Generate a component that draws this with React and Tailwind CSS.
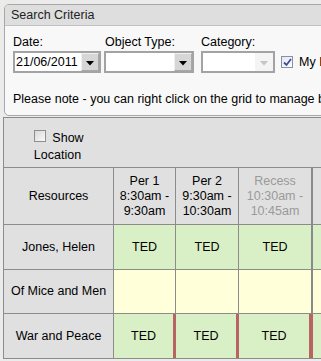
import React from "react";

function DropBtn({ disabled }) {
  return (
    <div
      className={
        "w-[18px] h-[18px] flex items-center justify-center border " +
        (disabled
          ? "bg-[#f4f4f4] border-[#f4f4f4]"
          : "bg-[#d6d6d6] border-t-[#f0f0f0] border-l-[#f0f0f0] border-r-[#a8a8a8] border-b-[#a8a8a8]")
      }
    >
      <svg width="8" height="5" viewBox="0 0 8 5" className="mt-[2px]">
        <polygon points="0,0 8,0 4,4.5" fill={disabled ? "#c4c4c4" : "#000"} />
      </svg>
    </div>
  );
}

function Select({ width, value, disabled }) {
  return (
    <div
      className="h-[22px] border-2 border-[#a3a3a3] bg-white flex items-center"
      style={{ width }}
    >
      <div className="flex-1 pl-[1px] text-black leading-none">{value}</div>
      <DropBtn disabled={disabled} />
    </div>
  );
}

function Row({ h, cells }) {
  return (
    <div className={"flex border-b border-[#8c8c8c] " + h}>
      {cells}
    </div>
  );
}

export default function App() {
  const border = "border-r border-[#8c8c8c]";
  const resCell = (t) => (
    <div className={"w-[110px] shrink-0 bg-[#e0e0e0] flex items-center justify-center " + border}>
      {t}
    </div>
  );
  const cell = (w, color, text, red) => (
    <div
      className={
        w +
        " shrink-0 flex items-center justify-center " +
        color +
        " " +
        (red ? "border-r-[3px] border-[#b86464]" : border)
      }
    >
      {text}
    </div>
  );
  const green = "bg-[#d9efc5]";
  const yellow = "bg-[#ffffd9]";

  return (
    <div className="w-[321px] h-[361px] overflow-hidden bg-[#ebebeb] pt-[4px] font-['Liberation_Sans',Arial,sans-serif] text-[12.5px] text-black">
      {/* Search criteria panel */}
      <div className="ml-[4px] w-[420px] border border-[#a8a8a8] rounded-l-[5px] bg-[#f8f8f8] overflow-hidden">
        <div className="h-[21px] bg-[#dedede] border-b border-[#c2c2c2] pl-[6px] flex items-center text-[#222]">
          Search Criteria
        </div>
        <div className="pl-[8px] pt-[9px] pb-[8px]">
          <div className="flex items-end">
            <div className="flex flex-col">
              <div className="leading-[15px] h-[16px]">Date:</div>
              <Select width={88} value="21/06/2011" />
            </div>
            <div className="flex flex-col ml-[3px]">
              <div className="leading-[15px] h-[16px] pl-[1px]">Object Type:</div>
              <Select width={90} value="" />
            </div>
            <div className="flex flex-col ml-[7px]">
              <div className="leading-[15px] h-[16px]">Category:</div>
              <Select width={74} value="" disabled />
            </div>
            <div className="flex items-center ml-[6px] h-[22px]">
              <div className="w-[12px] h-[12px] border border-[#8a8fa8] bg-gradient-to-br from-[#e4e6f0] to-[#ffffff] flex items-center justify-center">
                <svg width="9" height="9" viewBox="0 0 9 9">
                  <path d="M1 4.5 L3.5 7 L8 1" stroke="#3f4f9a" strokeWidth="1.8" fill="none" />
                </svg>
              </div>
              <span className="ml-[6px] text-[#000]">My Bookings</span>
            </div>
          </div>
          <div className="mt-[19px] leading-[15px] whitespace-nowrap">
            Please note - you can right click on the grid to manage bookings
          </div>
        </div>
      </div>

      {/* Grid */}
      <div className="ml-[3px] mt-[1px] w-[400px] border-l border-t border-[#8c8c8c] leading-[15px]">
        <div className="h-[50px] bg-[#e0e0e0] border-b border-[#8c8c8c] flex">
          <div className="w-[110px] flex flex-col items-center justify-center pt-[8px]">
            <div className="flex items-center">
              <div className="w-[12px] h-[12px] border border-[#8e8e8e] bg-gradient-to-br from-[#d8d8d8] to-[#fafafa] mr-[6px] -mt-[4px]" />
              <span>Show</span>
            </div>
            <div className="-ml-[3px] mt-[2px]">Location</div>
          </div>
        </div>
        <Row
          h="h-[57px]"
          cells={
            <>
              {resCell("Resources")}
              <div className={"w-[62px] shrink-0 bg-[#e0e0e0] flex flex-col items-center justify-center text-center " + border}>
                <div>Per 1</div>
                <div>8:30am -</div>
                <div>9:30am</div>
              </div>
              <div className={"w-[63px] shrink-0 bg-[#e0e0e0] flex flex-col items-center justify-center text-center " + border}>
                <div>Per 2</div>
                <div>9:30am -</div>
                <div>10:30am</div>
              </div>
              <div className="w-[74px] shrink-0 bg-[#e0e0e0] flex flex-col items-center justify-center text-center text-[#9a9a9a] border-r-2 border-[#8a8a8a]">
                <div>Recess</div>
                <div>10:30am -</div>
                <div>10:45am</div>
              </div>
              <div className="flex-1 bg-[#e0e0e0]" />
            </>
          }
        />
        <Row
          h="h-[45px]"
          cells={
            <>
              {resCell("Jones, Helen")}
              {cell("w-[62px]", green, "TED")}
              {cell("w-[63px]", green, "TED")}
              <div className={"w-[74px] shrink-0 flex items-center justify-center border-r-2 border-[#8a8a8a] " + green}>TED</div>
              <div className={"flex-1 " + green} />
            </>
          }
        />
        <Row
          h="h-[44px]"
          cells={
            <>
              {resCell("Of Mice and Men")}
              {cell("w-[62px]", yellow, "")}
              {cell("w-[63px]", yellow, "")}
              <div className={"w-[74px] shrink-0 border-r-2 border-[#8a8a8a] " + yellow} />
              <div className={"flex-1 " + yellow} />
            </>
          }
        />
        <Row
          h="h-[45px]"
          cells={
            <>
              {resCell("War and Peace")}
              {cell("w-[62px]", green, "TED", true)}
              {cell("w-[63px]", green, "TED", true)}
              <div className={"w-[74px] shrink-0 flex items-center justify-center border-r-[4px] border-[#b86464] " + green}>TED</div>
              <div className={"flex-1 " + green} />
            </>
          }
        />
      </div>
    </div>
  );
}
